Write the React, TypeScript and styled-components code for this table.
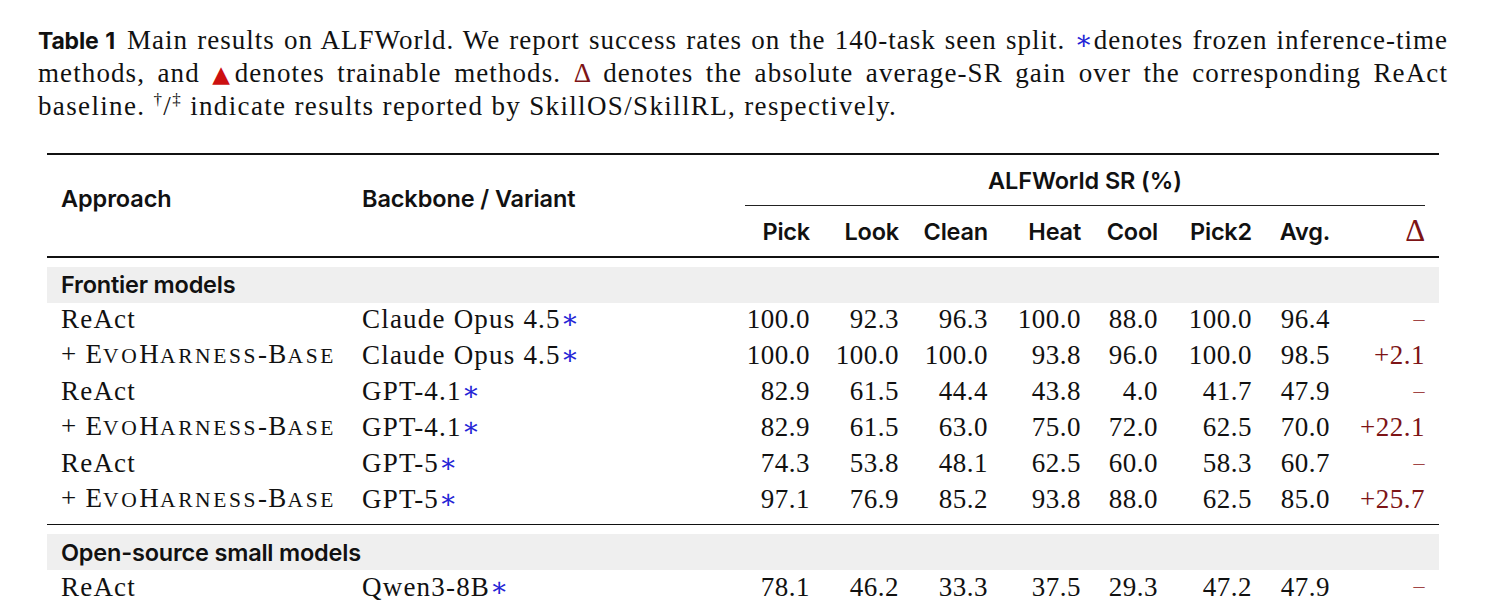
import React from "react";
import styled, { createGlobalStyle } from "styled-components";

const Global = createGlobalStyle`
  html, body { margin: 0; padding: 0; background: #ffffff; }
  body { font-family: "Liberation Serif", "DejaVu Serif", serif; color: #111; }
`;

const SERIF = `"Liberation Serif", "DejaVu Serif", serif`;
const SANS = `Inter, "Open Sans", "DejaVu Sans", sans-serif`;
const MAROON = "#7d1416";
const COLS = "301px 397px 79px 89px 89px 93px 77px 94px 78px 95px";

const Page = styled.div`
  width: 1485px;
  padding-top: 24px;
  box-sizing: border-box;
`;

const Caption = styled.div`
  margin-left: 38px;
  width: 1410px;
  font-family: ${SERIF};
  font-size: 27px;
  line-height: 33px;
  color: #111;
`;

const CapLine = styled.div<{ $justify?: boolean; $ls: number }>`
  height: 33px;
  letter-spacing: ${(p) => p.$ls}px;
  text-align: ${(p) => (p.$justify ? "justify" : "left")};
  text-align-last: ${(p) => (p.$justify ? "justify" : "left")};
  white-space: nowrap;
`;

const CapLabel = styled.span`
  font-family: ${SANS};
  font-weight: 700;
  font-size: 23px;
  letter-spacing: -0.2px;
  margin-right: 3px;
`;

const Blue = styled.span`
  color: #2323d6;
`;

const Red = styled.span`
  color: #cc1010;
  font-family: "DejaVu Sans", sans-serif;
  font-size: 23px;
  letter-spacing: 0;
`;

const Maroon = styled.span`
  color: ${MAROON};
`;

const Sup = styled.sup`
  font-size: 17px;
  line-height: 0;
`;

const Table = styled.div`
  margin: 30px 0 0 47px;
  width: 1392px;
`;

const Rule = styled.div<{ $w: number }>`
  height: ${(p) => p.$w}px;
  background: #111;
`;

const Spacer = styled.div<{ $h: number }>`
  height: ${(p) => p.$h}px;
`;

const HeadGrid = styled.div`
  display: grid;
  grid-template-columns: ${COLS};
  grid-template-rows: 50px 1px 50px;
`;

const HeadMain = styled.div<{ $col: number }>`
  grid-column: ${(p) => p.$col};
  grid-row: 1 / 4;
  align-self: center;
  padding: 0 0 14px 14px;
  font-family: ${SANS};
  font-weight: 600;
  font-size: 23.5px;
  letter-spacing: -0.1px;
`;

const GroupHead = styled.div`
  grid-column: 3 / 11;
  grid-row: 1;
  align-self: center;
  margin-right: 14px;
  text-align: center;
  font-family: ${SANS};
  font-weight: 600;
  font-size: 23.5px;
  letter-spacing: -0.1px;
`;

const CMidRule = styled.div`
  grid-column: 3 / 11;
  grid-row: 2;
  margin-right: 14px;
  background: #222;
`;

const SubHead = styled.div<{ $delta?: boolean }>`
  grid-row: 3;
  align-self: center;
  text-align: right;
  padding-right: 14px;
  font-family: ${(p) => (p.$delta ? SERIF : SANS)};
  font-weight: ${(p) => (p.$delta ? 400 : 600)};
  font-size: ${(p) => (p.$delta ? "31px" : "23.5px")};
  color: ${(p) => (p.$delta ? MAROON : "#111")};
  letter-spacing: -0.2px;
`;

const Section = styled.div`
  height: 36px;
  display: flex;
  align-items: center;
  padding-left: 14px;
  background: #efefef;
  font-family: ${SANS};
  font-weight: 600;
  font-size: 23.5px;
  letter-spacing: -0.2px;
`;

const Row = styled.div`
  display: grid;
  grid-template-columns: ${COLS};
  height: 36px;
  box-sizing: border-box;
  padding-bottom: 2px;
  align-items: center;
  font-family: ${SERIF};
  font-size: 27px;
  line-height: 31px;
  white-space: nowrap;
`;

const TextCell = styled.div`
  padding-left: 14px;
  letter-spacing: 1.2px;
`;

const NumCell = styled.div<{ $delta?: boolean }>`
  text-align: right;
  padding-right: 14px;
  letter-spacing: 0.5px;
  color: ${(p) => (p.$delta ? MAROON : "#111")};
`;

const Dash = styled.span`
  display: inline-block;
  color: #a04545;
  font-size: 22px;
  transform: translateY(-2px);
`;

const Sc = styled.span`
  font-size: 21.5px;
  letter-spacing: 2.6px;
`;

const EvoName = () => (
  <>
    + E<Sc>VO</Sc>H<Sc>ARNESS</Sc>-B<Sc>ASE</Sc>
  </>
);

type R = { approach: "react" | "evo"; backbone: string; vals: string[]; delta: string | null };

const frontier: R[] = [
  { approach: "react", backbone: "Claude Opus 4.5", vals: ["100.0", "92.3", "96.3", "100.0", "88.0", "100.0", "96.4"], delta: null },
  { approach: "evo", backbone: "Claude Opus 4.5", vals: ["100.0", "100.0", "100.0", "93.8", "96.0", "100.0", "98.5"], delta: "+2.1" },
  { approach: "react", backbone: "GPT-4.1", vals: ["82.9", "61.5", "44.4", "43.8", "4.0", "41.7", "47.9"], delta: null },
  { approach: "evo", backbone: "GPT-4.1", vals: ["82.9", "61.5", "63.0", "75.0", "72.0", "62.5", "70.0"], delta: "+22.1" },
  { approach: "react", backbone: "GPT-5", vals: ["74.3", "53.8", "48.1", "62.5", "60.0", "58.3", "60.7"], delta: null },
  { approach: "evo", backbone: "GPT-5", vals: ["97.1", "76.9", "85.2", "93.8", "88.0", "62.5", "85.0"], delta: "+25.7" },
];

const small: R[] = [
  { approach: "react", backbone: "Qwen3-8B", vals: ["78.1", "46.2", "33.3", "37.5", "29.3", "47.2", "47.9"], delta: null },
];

const DataRow = ({ r }: { r: R }) => (
  <Row>
    <TextCell>{r.approach === "react" ? "ReAct" : <EvoName />}</TextCell>
    <TextCell>
      {r.backbone}
      <Blue>∗</Blue>
    </TextCell>
    {r.vals.map((v, i) => (
      <NumCell key={i}>{v}</NumCell>
    ))}
    <NumCell $delta>{r.delta ?? <Dash>–</Dash>}</NumCell>
  </Row>
);

const subs = ["Pick", "Look", "Clean", "Heat", "Cool", "Pick2", "Avg."];

export default function App() {
  return (
    <Page>
      <Global />
      <Caption>
        <CapLine $justify $ls={1.0}>
          <CapLabel>Table 1</CapLabel> Main results on ALFWorld. We report success rates on the 140-task seen split.{" "}
          <Blue>∗</Blue>denotes frozen inference-time
        </CapLine>
        <CapLine $justify $ls={1.1}>
          methods, and <Red>▲</Red>denotes trainable methods. <Maroon>Δ</Maroon> denotes the absolute average-SR gain over the corresponding ReAct
        </CapLine>
        <CapLine $ls={1.35}>
          baseline. <Sup>†</Sup>/<Sup>‡</Sup> indicate results reported by SkillOS/SkillRL, respectively.
        </CapLine>
      </Caption>
      <Table>
        <Rule $w={2} />
        <HeadGrid>
          <HeadMain $col={1}>Approach</HeadMain>
          <HeadMain $col={2}>Backbone / Variant</HeadMain>
          <GroupHead>ALFWorld SR (%)</GroupHead>
          <CMidRule />
          {subs.map((s) => (
            <SubHead key={s}>{s}</SubHead>
          ))}
          <SubHead $delta>Δ</SubHead>
        </HeadGrid>
        <Rule $w={1.5} />
        <Spacer $h={9} />
        <Section>Frontier models</Section>
        {frontier.map((r, i) => (
          <DataRow key={i} r={r} />
        ))}
        <Spacer $h={5} />
        <Rule $w={1.5} />
        <Spacer $h={9} />
        <Section>Open-source small models</Section>
        {small.map((r, i) => (
          <DataRow key={i} r={r} />
        ))}
      </Table>
    </Page>
  );
}
